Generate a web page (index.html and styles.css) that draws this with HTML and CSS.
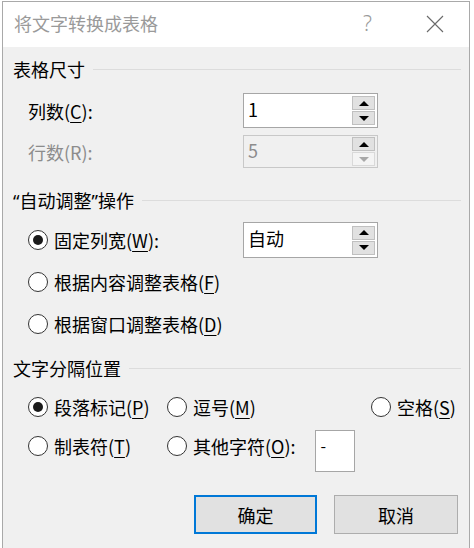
FILE: index.html
```html
<!DOCTYPE html>
<html lang="zh-CN">
<head>
<meta charset="utf-8">
<title>将文字转换成表格</title>
<link rel="stylesheet" href="styles.css">
</head>
<body>
<div class="dialog">
  <div class="titlebar">
    <span class="title">将文字转换成表格</span>
    <span class="help">?</span>
    <svg class="close" width="18" height="18" viewBox="0 0 18 18"><path d="M1 1L17 17M17 1L1 17" stroke="#6a6a6a" stroke-width="1.1" fill="none"/></svg>
  </div>
  <div class="content">
    <div class="group-head h1"><span>表格尺寸</span><i class="rule"></i></div>
    <div class="field r-cols">
      <span class="label">列数(<u>C</u>):</span>
      <div class="spin">
        <span class="val">1</span>
        <div class="btns">
          <span class="sb"><i class="up"></i></span>
          <span class="sb"><i class="down"></i></span>
        </div>
      </div>
    </div>
    <div class="field r-rows disabled">
      <span class="label">行数(R):</span>
      <div class="spin off">
        <span class="val">5</span>
        <div class="btns">
          <span class="sb"><i class="up"></i></span>
          <span class="sb dim"><i class="down"></i></span>
        </div>
      </div>
    </div>

    <div class="group-head h2"><span><span class="q">“</span>自动调整<span class="q">”</span>操作</span><i class="rule"></i></div>
    <div class="field r-fixed">
      <label class="radio on"><i class="dot"></i>固定列宽(<u>W</u>):</label>
      <div class="spin tall">
        <span class="val">自动</span>
        <div class="btns">
          <span class="sb"><i class="up"></i></span>
          <span class="sb"><i class="down"></i></span>
        </div>
      </div>
    </div>
    <div class="field r-content">
      <label class="radio"><i class="dot"></i>根据内容调整表格(<u>F</u>)</label>
    </div>
    <div class="field r-window">
      <label class="radio"><i class="dot"></i>根据窗口调整表格(<u>D</u>)</label>
    </div>

    <div class="group-head h3"><span>文字分隔位置</span><i class="rule"></i></div>
    <div class="sep r-sep1">
      <label class="radio on c1"><i class="dot"></i>段落标记(<u>P</u>)</label>
      <label class="radio c2"><i class="dot"></i>逗号(<u>M</u>)</label>
      <label class="radio c3"><i class="dot"></i>空格(<u>S</u>)</label>
    </div>
    <div class="sep r-sep2">
      <label class="radio c1"><i class="dot"></i>制表符(<u>T</u>)</label>
      <label class="radio c2"><i class="dot"></i>其他字符(<u>O</u>):</label>
      <span class="other">-</span>
    </div>

    <div class="actions">
      <button class="btn primary">确定</button>
      <button class="btn">取消</button>
    </div>
  </div>
</div>
</body>
</html>
```
FILE: styles.css
```css
html, body {
  margin: 0;
  padding: 0;
}
body {
  width: 474px;
  height: 548px;
  overflow: hidden;
  background: #ffffff;
  font-family: "Noto Sans CJK SC", "Microsoft YaHei", sans-serif;
  font-size: 18px;
  color: #000;
}
.dialog {
  margin-left: 2px;
  margin-top: 1px;
  width: 466px;
  height: 560px;
  border: 1px solid #a9a9a9;
  border-bottom: none;
  background: #f0f0f0;
  display: flex;
  flex-direction: column;
}
.titlebar {
  height: 45px;
  background: #fff;
  display: flex;
  align-items: center;
  flex: none;
}
.title {
  margin-left: 11px;
  margin-top: -3px;
  color: #9a9a9a;
  font-size: 18px;
  line-height: 24px;
  flex: 1;
}
.help {
  color: #9a9a9a;
  font-family: "Noto Sans", sans-serif;
  font-weight: 300;
  font-size: 21px;
  line-height: 24px;
  margin-right: 54px;
  margin-top: -4px;
}
.close {
  margin-right: 25px;
  margin-top: -2px;
}
.content {
  padding: 10px 0 0 10px;
  display: flex;
  flex-direction: column;
}
.group-head {
  display: flex;
  align-items: center;
  height: 24px;
  line-height: 24px;
  padding-right: 8px;
}
.group-head .rule {
  flex: 1;
  height: 1px;
  background: #dcdcdc;
  margin-left: 8px;
}
.q {
  font-family: "Noto Sans", sans-serif;
}
.field {
  display: flex;
  align-items: center;
  padding-left: 15px;
  line-height: 24px;
}
.label {
  width: 215px;
}
.disabled .label {
  color: #8c8c8c;
}
.r-cols { margin-top: 12px; height: 35px; }
.r-rows { margin-top: 7px; height: 33px; }
.h2 { margin-top: 20px; }
.r-fixed { margin-top: 10px; height: 36px; }
.r-fixed .radio { width: 215px; }
.r-content { margin-top: 12px; height: 24px; }
.r-window { margin-top: 18px; height: 24px; }
.h3 { margin-top: 20px; }
.spin {
  box-sizing: border-box;
  width: 135px;
  height: 35px;
  border: 1px solid #a6a6a6;
  background: #fff;
  display: flex;
  align-items: center;
  justify-content: space-between;
  padding: 0 2px 0 4px;
}
.spin.off {
  height: 33px;
  background: #f0f0f0;
  border-color: #c8c8c8;
}
.spin.off .val { color: #8c8c8c; }
.spin.tall { height: 36px; }
.val {
  font-size: 18px;
  line-height: 24px;
  margin-top: -4px;
}
.btns {
  display: flex;
  flex-direction: column;
  gap: 1px;
}
.sb {
  box-sizing: border-box;
  width: 23px;
  height: 14px;
  background: #e1e1e1;
  border: 1px solid #c0c0c0;
  display: flex;
  align-items: center;
  justify-content: center;
}
.sb.dim {
  background: #f4f4f4;
  border-color: #d9d9d9;
}
.up, .down {
  width: 0;
  height: 0;
  border-left: 5px solid transparent;
  border-right: 5px solid transparent;
}
.up { border-bottom: 5px solid #000; }
.down { border-top: 5px solid #000; }
.sb.dim .down { border-top-color: #a8a8a8; }
.radio {
  display: flex;
  align-items: center;
  line-height: 24px;
  white-space: nowrap;
}
.radio .dot {
  box-sizing: border-box;
  width: 20px;
  height: 20px;
  border: 1px solid #333;
  border-radius: 50%;
  background: #fff;
  margin-right: 6px;
  display: flex;
  align-items: center;
  justify-content: center;
  flex: none;
}
.radio.on .dot::after {
  content: "";
  width: 10px;
  height: 10px;
  border-radius: 50%;
  background: #1a1a1a;
}
u {
  text-decoration-thickness: 1px;
  text-underline-offset: 3px;
}
.sep {
  display: flex;
  align-items: center;
  height: 24px;
  padding-left: 15px;
}
.r-sep1 { margin-top: 15px; }
.r-sep2 { margin-top: 15px; }
.c1 { width: 139px; }
.c2 { width: 204px; }
.r-sep2 .c2 { width: auto; margin-right: 19px; }
.other {
  box-sizing: border-box;
  align-self: flex-start;
  margin-top: -4px;
  width: 40px;
  height: 42px;
  background: #fff;
  border: 1px solid #a6a6a6;
  font-size: 16px;
  line-height: 20px;
  padding-left: 5px;
  padding-top: 4px;
}
.actions {
  display: flex;
  gap: 17px;
  padding-left: 181px;
  margin-top: 37px;
}
.btn {
  box-sizing: border-box;
  width: 124px;
  height: 39px;
  background: #e1e1e1;
  border: 1px solid #adadad;
  font-family: "Noto Sans CJK SC", "Microsoft YaHei", sans-serif;
  font-size: 18px;
  color: #000;
  padding: 0;
}
.btn.primary {
  width: 123px;
  border: 2px solid #0078d7;
}
```
